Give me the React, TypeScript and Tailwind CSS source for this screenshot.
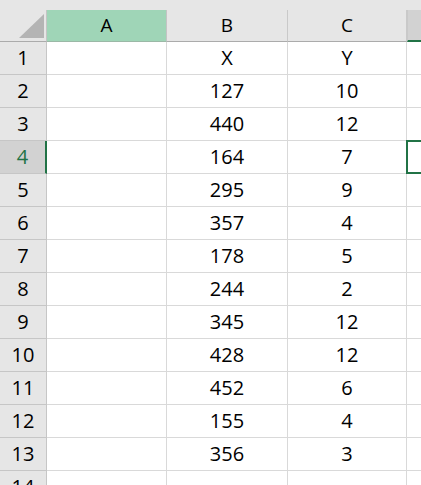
const rows: [string, string][] = [
  ['X', 'Y'],
  ['127', '10'],
  ['440', '12'],
  ['164', '7'],
  ['295', '9'],
  ['357', '4'],
  ['178', '5'],
  ['244', '2'],
  ['345', '12'],
  ['428', '12'],
  ['452', '6'],
  ['155', '4'],
  ['356', '3'],
  ['', ''],
];

const cols = 'grid grid-cols-[47px_120px_121px_119px_1fr]';

export default function App() {
  return (
    <div className="w-[421px] h-[485px] overflow-hidden bg-white font-['Open_Sans','Noto_Sans',sans-serif] text-black">
      <div className="h-[10px] bg-[#e6e6e6]" />

      {/* column headers */}
      <div className={`${cols} h-[32px] bg-[#e6e6e6] text-[19px]`}>
        <div className="flex items-end justify-end border-b border-r border-[#c4c4c4] border-b-[#ababab] pr-[2px] pb-[3px]">
          <svg width="25" height="24" viewBox="0 0 25 24">
            <polygon points="25,0 25,24 0,24" fill="#b4b4b4" />
          </svg>
        </div>
        <div className="flex items-center justify-center border-b border-r border-[#c4c4c4] border-b-[#9bb8a6] bg-[#9fd5b7]">A</div>
        <div className="flex items-center justify-center border-b border-r border-[#c9c9c9] border-b-[#ababab]">B</div>
        <div className="flex items-center justify-center border-b border-r border-[#c9c9c9] border-b-[#ababab]">C</div>
        <div className="border-b-2 border-l border-[#217346] border-l-[#c9c9c9] bg-[#d2d2d2]" />
      </div>

      {rows.map(([x, y], i) => {
        const sel = i === 3;
        return (
          <div key={i} className={`${cols} h-[33px] text-[20px]`}>
            <div
              className={`flex items-center justify-center border-b border-[#c6c6c6] ${
                sel
                  ? 'border-r-2 border-r-[#217346] bg-[#d2d2d2] text-[#217346]'
                  : 'border-r bg-[#e6e6e6]'
              }`}
            >
              {i + 1}
            </div>
            <div className="border-b border-r border-[#d9d9d9]" />
            <div className="flex items-center justify-center border-b border-r border-[#d9d9d9]">{x}</div>
            <div className="flex items-center justify-center border-b border-r border-[#d9d9d9]">{y}</div>
            <div className="relative border-b border-[#d9d9d9]">
              {sel && <div className="absolute -left-px -top-px -bottom-px -right-[10px] border-2 border-[#217346]" />}
            </div>
          </div>
        );
      })}
    </div>
  );
}
